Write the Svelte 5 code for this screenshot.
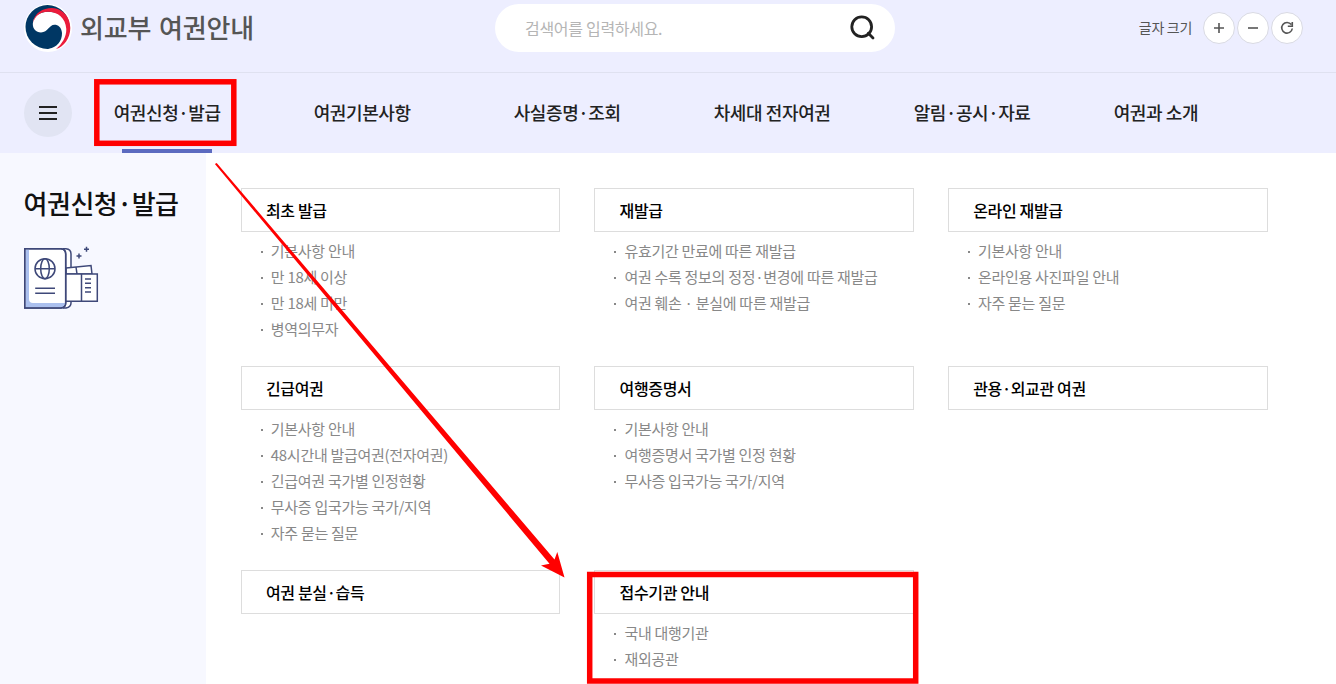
<script lang="ts">
    const menus = [
        "여권신청·발급",
        "여권기본사항",
        "사실증명·조회",
        "차세대 전자여권",
        "알림·공시·자료",
        "여권과 소개",
    ];

    const groups = [
        { title: "최초 발급", items: ["기본사항 안내", "만 18세 이상", "만 18세 미만", "병역의무자"] },
        {
            title: "재발급",
            items: [
                "유효기간 만료에 따른 재발급",
                "여권 수록 정보의 정정·변경에 따른 재발급",
                "여권 훼손 · 분실에 따른 재발급",
            ],
        },
        { title: "온라인 재발급", items: ["기본사항 안내", "온라인용 사진파일 안내", "자주 묻는 질문"] },
        {
            title: "긴급여권",
            items: [
                "기본사항 안내",
                "48시간내 발급여권(전자여권)",
                "긴급여권 국가별 인정현황",
                "무사증 입국가능 국가/지역",
                "자주 묻는 질문",
            ],
        },
        { title: "여행증명서", items: ["기본사항 안내", "여행증명서 국가별 인정 현황", "무사증 입국가능 국가/지역"] },
        { title: "관용·외교관 여권", items: [] },
        { title: "여권 분실·습득", items: [] },
        { title: "접수기관 안내", items: ["국내 대행기관", "재외공관"] },
    ];

    let active = $state(0);
    let keyword = $state("");
</script>

<div class="page">
    <header class="top">
        <div class="brand">
            <svg class="emblem" width="48" height="48" viewBox="0 0 48 48">
                <circle cx="24" cy="24" r="24" fill="#fff" />
                <circle cx="23.5" cy="23" r="22" fill="#003764" />
                <path d="M8.800 20C9 13 15 7.800 24 7.800C38 8 47 16 46 26C45 37 38 44.500 30 46L24 45.200C33 43.500 38.200 37 38 29C37.500 23 34 20.700 30.500 20.700C25 20.700 24 28.400 17 28.400C12 28.400 8.800 25 8.800 20Z" fill="#fff" />
                <path d="M9 19C10 9 19 4 28 4C39 4.500 46.300 13 46.300 24C46.300 34 40 43 32 45C38 40 42.500 33 42.300 25C41.500 14 34 7.800 24 7.800C16 7.800 11 12 9 19Z" fill="#eb1c3b" />
            </svg>
            <h1>외교부 여권안내</h1>
        </div>
        <div class="search">
            <input type="text" placeholder="검색어를 입력하세요." bind:value={keyword} />
            <button class="search-button" aria-label="검색">
                <svg width="28" height="28" viewBox="0 0 28 28" fill="none" stroke="#222" stroke-width="2.800">
                    <circle cx="12.700" cy="12.700" r="9.900" />
                    <path d="M19.300 19.300L24 24" stroke-linecap="round" />
                </svg>
            </button>
        </div>
        <div class="text-size">
            <span>글자 크기</span>
            <button aria-label="크게">
                <svg width="12" height="12" viewBox="0 0 12 12"><path d="M1 6H11M6 1V11" /></svg>
            </button>
            <button aria-label="작게">
                <svg width="12" height="12" viewBox="0 0 12 12"><path d="M1 6H11" /></svg>
            </button>
            <button aria-label="초기화">
                <svg width="14" height="14" viewBox="0 0 14 14">
                    <path d="M11.300 3.600A5.300 5.300 0 1 0 12.300 7.500M12.300 1V5.300H7.800" />
                </svg>
            </button>
        </div>
    </header>

    <nav>
        <button class="all-menu" aria-label="전체메뉴">
            <span></span><span></span><span></span>
        </button>
        <ul>
            {#each menus as menu, i}
                <li class:active={i === active}>
                    <button onclick={() => (active = i)}>{menu}</button>
                </li>
            {/each}
        </ul>
    </nav>

    <main>
        <aside>
            <h2>{menus[active]}</h2>
            <svg width="76" height="64" viewBox="0 0 76 64" fill="none" stroke="#3e4879" stroke-width="1.500">
                <path d="M39 2.700H42Q47 3 47 8V57Q47 61 42 62H39" fill="#fff" />
                <path d="M42 22L67 19.500L68 28H42Z" fill="#fff" />
                <path d="M52 21L53 28" />
                <path d="M41 28H73.300V55.200H41Z" fill="#fff" />
                <path d="M57.500 28V55M61 33H67M61 37.300H67M61 41.700H67M61 46H67" />
                <path d="M.8 2.700H37Q41.700 3 41.700 8V57Q41.700 61.500 37 62H.8Z" fill="#fff" />
                <path d="M1.500 3.500H5V53Q5 57 9 57H41Q40.500 61 37 61.300H1.500Z" fill="#abc0ee" stroke="none" />
                <path d="M.8 2.700H37Q41.700 3 41.700 8V57Q41.700 61.500 37 62H.8Z" />
                <circle cx="21" cy="22.700" r="10" />
                <ellipse cx="21" cy="22.700" rx="4.300" ry="10" />
                <path d="M11 22.700H31M11.200 42.300H31M11.200 47.300H31" />
                <path d="M52.500 10H57.500M55 7.500V12.500M60 3.300H65M62.500 .8V5.800" />
            </svg>
        </aside>
        <section class="groups">
            {#each groups as group}
                <div class="group">
                    <h3>{group.title}</h3>
                    {#if group.items.length}
                        <ul>
                            {#each group.items as item}
                                <li>{item}</li>
                            {/each}
                        </ul>
                    {/if}
                </div>
            {/each}
        </section>
    </main>

    <!-- guide marks over the menu -->
    <svg class="marks" width="1336" height="684" viewBox="0 0 1336 684">
        <rect x="96.800" y="81.800" width="137" height="61.500" />
        <rect x="589.700" y="574.500" width="326" height="106.500" />
        <path d="M214.900 164.100L216.700 162.900L554.500 559.500L557.300 552L564.500 577.500L541 565.500L549.500 563.700Z" />
    </svg>
</div>

<style>
    :global(body) {
        margin: 0;
        overflow: hidden;
    }
    .page {
        position: relative;
        height: 684px;
        overflow: hidden;
        background: #fff;
        font-family: "Noto Sans CJK KR", sans-serif;
        color: #222;
    }
    h1, h2, h3, ul {
        margin: 0;
        padding: 0;
        list-style: none;
    }
    button {
        padding: 0;
        border: 0;
        background: none;
        font-family: inherit;
        color: inherit;
        cursor: pointer;
    }
    .top {
        display: grid;
        grid-template-columns: 471px 400px 1fr;
        height: 72px;
        padding: 0 33px 0 24px;
        border-bottom: 1px solid #dfe1f0;
        background: #edeeff;
    }
    .brand {
        display: flex;
        gap: 8px;
        padding-top: 4px;
    }
    h1 {
        font-size: 26px;
        font-weight: 500;
        line-height: 46px;
        letter-spacing: -0.15px;
        word-spacing: 2px;
        color: #555;
        white-space: nowrap;
    }
    .search {
        display: flex;
        align-items: center;
        box-sizing: border-box;
        height: 48px;
        margin-top: 4px;
        padding: 0 18px 0 30px;
        border-radius: 24px;
        background: #fff;
    }
    .search input {
        flex: 1;
        padding: 0;
        border: 0;
        outline: 0;
        font: 400 16px "Noto Sans CJK KR", sans-serif;
        letter-spacing: -0.3px;
    }
    .search input::placeholder {
        color: #b5b5b5;
    }
    .search-button svg {
        display: block;
    }
    .text-size {
        display: flex;
        justify-content: flex-end;
        align-items: center;
        gap: 2px;
        height: 56px;
    }
    .text-size span {
        margin-right: 9px;
        padding-bottom: 2px;
        font-size: 14px;
        letter-spacing: -0.3px;
        color: #555;
    }
    .text-size button {
        display: flex;
        align-items: center;
        justify-content: center;
        box-sizing: border-box;
        width: 32px;
        height: 32px;
        border: 1px solid #d9dae3;
        border-radius: 50%;
        background: #fff;
    }
    .text-size svg {
        fill: none;
        stroke: #555;
        stroke-width: 1.6;
    }
    nav {
        display: flex;
        align-items: center;
        height: 80px;
        padding-left: 24px;
        background: #edeeff;
    }
    .all-menu {
        display: flex;
        flex-direction: column;
        align-items: center;
        justify-content: center;
        gap: 4px;
        width: 48px;
        height: 48px;
        border-radius: 50%;
        background: #e1e4f3;
    }
    .all-menu span {
        width: 18px;
        height: 2px;
        background: #222;
    }
    nav ul {
        display: flex;
        height: 80px;
        padding-left: 41.7px;
    }
    nav li {
        display: flex;
        width: 200px;
    }
    nav li button {
        height: 80px;
        padding-bottom: 2px;
        font-size: 18px;
        font-weight: 500;
        letter-spacing: -0.4px;
        white-space: nowrap;
    }
    nav .active button {
        background: linear-gradient(#5c6bc0, #5c6bc0) 8px 100% / 90px 4px no-repeat;
    }
    main {
        display: flex;
        height: 531px;
    }
    aside {
        box-sizing: border-box;
        width: 206px;
        padding: 31px 0 0 23.6px;
        background: #f7f8ff;
    }
    h2 {
        height: 62px;
        font-size: 26px;
        font-weight: 500;
        line-height: 38px;
        letter-spacing: -0.5px;
        color: #111;
        white-space: nowrap;
    }
    .groups {
        display: grid;
        grid-template-columns: repeat(3, 1fr);
        align-content: start;
        gap: 24px 34px;
        width: 1026.8px;
        padding: 35px 0 0 34.8px;
    }
    h3 {
        box-sizing: border-box;
        height: 44px;
        padding-left: 24.2px;
        border: 1px solid #ddd;
        font-size: 16px;
        font-weight: 500;
        line-height: 42px;
        letter-spacing: -0.35px;
        color: #000;
    }
    .group ul {
        padding: 6px 0 0 20px;
    }
    .group li {
        display: flex;
        align-items: center;
        gap: 8px;
        height: 26px;
        font-size: 15px;
        line-height: 26px;
        letter-spacing: -0.29px;
        color: #888;
        white-space: nowrap;
    }
    .group li::before {
        content: "";
        width: 2px;
        height: 2px;
        margin-top: 1px;
        background: #888;
    }
    .marks {
        position: absolute;
        top: 0;
        left: 0;
        pointer-events: none;
    }
    .marks rect {
        fill: none;
        stroke: #f00;
        stroke-width: 5.5;
    }
    .marks path {
        fill: #f00;
    }
</style>
